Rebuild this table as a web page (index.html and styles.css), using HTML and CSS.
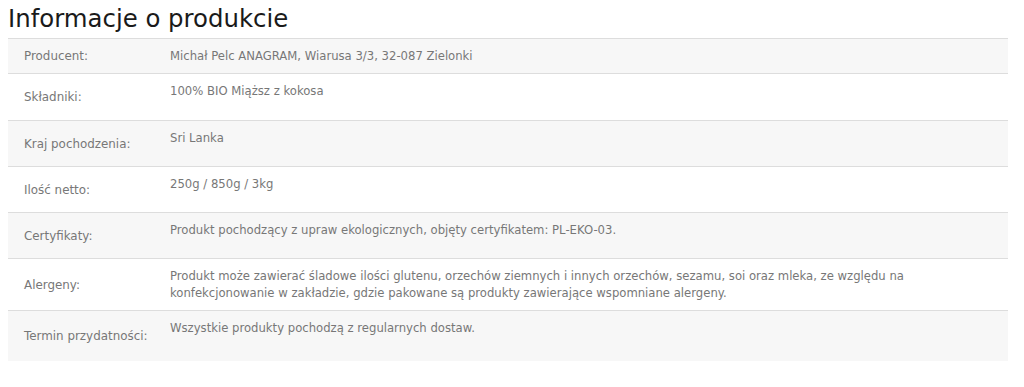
FILE: index.html
```html
<!DOCTYPE html>
<html lang="pl">
<head>
<meta charset="utf-8">
<title>Informacje o produkcie</title>
<link rel="stylesheet" href="styles.css">
</head>
<body>
<h1 class="title">Informacje o produkcie</h1>
<table class="info">
  <tr class="row row-compact">
    <th class="label">Producent:</th>
    <td class="value">Michał Pelc ANAGRAM, Wiarusa 3/3, 32-087 Zielonki</td>
  </tr>
  <tr class="row row-tall">
    <th class="label">Składniki:</th>
    <td class="value">100% BIO Miąższ z kokosa</td>
  </tr>
  <tr class="row">
    <th class="label">Kraj pochodzenia:</th>
    <td class="value">Sri Lanka</td>
  </tr>
  <tr class="row">
    <th class="label">Ilość netto:</th>
    <td class="value">250g / 850g / 3kg</td>
  </tr>
  <tr class="row">
    <th class="label">Certyfikaty:</th>
    <td class="value">Produkt pochodzący z upraw ekologicznych, objęty certyfikatem: PL-EKO-03.</td>
  </tr>
  <tr class="row row-multi">
    <th class="label">Alergeny:</th>
    <td class="value">Produkt może zawierać śladowe ilości glutenu, orzechów ziemnych i innych orzechów, sezamu, soi oraz mleka, ze względu na<br>konfekcjonowanie w zakładzie, gdzie pakowane są produkty zawierające wspomniane alergeny.</td>
  </tr>
  <tr class="row row-last">
    <th class="label">Termin przydatności:</th>
    <td class="value">Wszystkie produkty pochodzą z regularnych dostaw.</td>
  </tr>
</table>
</body>
</html>
```

FILE: styles.css
```css
body {
  margin: 8px;
  background: #ffffff;
  font-family: "DejaVu Sans", Verdana, sans-serif;
}

.title {
  margin: 0;
  height: 30px;
  font-size: 24.4px;
  line-height: 22px;
  font-weight: normal;
  color: #1a1a1a;
}

.info {
  width: 1000px;
  border-collapse: collapse;
  border-top: 1px solid #dddddd;
  line-height: 17px;
  color: #777777;
}

.row {
  border-bottom: 1px solid #dddddd;
}

.row:nth-child(odd) {
  background: #f7f7f7;
}

.row-last {
  border-bottom: none;
}

.label {
  width: 146px;
  padding: 15px 0 13px 16px;
  text-align: left;
  font-size: 11.9px;
  font-weight: normal;
  vertical-align: middle;
  white-space: nowrap;
}

.value {
  padding: 9px 16px 7px 0;
  font-size: 11.65px;
  vertical-align: top;
}

.row-compact .label {
  padding-top: 9px;
  padding-bottom: 8px;
}

.row-compact .value {
  padding-top: 9px;
  padding-bottom: 8px;
  vertical-align: middle;
}

.row-tall .label {
  padding-bottom: 14px;
}

.row-multi .value {
  padding-bottom: 8px;
}

.row-last .label {
  padding-top: 17px;
  padding-bottom: 16px;
}
```
